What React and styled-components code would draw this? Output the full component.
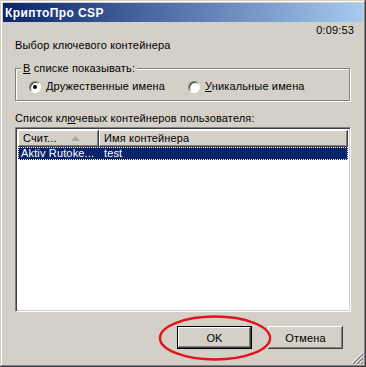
import styled, { createGlobalStyle } from "styled-components";

const GlobalStyle = createGlobalStyle`
  html, body {
    margin: 0;
    padding: 0;
    background: #d4d0c8;
  }
  body {
    font-family: "Liberation Sans", Arial, sans-serif;
    font-size: 11px;
    letter-spacing: 0.15px;
    color: #000;
  }
`;

const Window = styled.div`
  position: relative;
  width: 366px;
  height: 367px;
  box-sizing: border-box;
  padding: 3px;
  background: #d4d0c8;
  display: flex;
  flex-direction: column;
  box-shadow: inset -1px -1px #404040, inset 1px 1px #d4d0c8,
    inset -2px -2px #808080, inset 2px 2px #fff;
`;

const TitleBar = styled.div`
  height: 19px;
  flex-shrink: 0;
  display: flex;
  align-items: center;
  padding-left: 2px;
  background: linear-gradient(to right, #0a246a, #a6caf0);
  color: #fff;
  font-weight: bold;
  font-size: 12px;
  letter-spacing: 0.4px;
`;

const Body = styled.div`
  flex: 1;
  display: flex;
  flex-direction: column;
  padding: 0 12px 0 12px;
  line-height: 13px;
`;

const Timer = styled.div`
  margin-top: 2px;
  text-align: right;
  margin-right: -3px;
`;

const Caption = styled.div`
  margin-top: ${(p) => p.$top || 0}px;
`;

const GroupBox = styled.div`
  position: relative;
  margin-top: 16px;
  height: 33px;
  border: 1px solid #808080;
  box-shadow: inset 1px 1px #fff, 1px 1px #fff;
  display: flex;
  align-items: center;
  padding: 4px 0 0 13px;
  box-sizing: border-box;
  width: 335px;
`;

const Legend = styled.div`
  position: absolute;
  left: 5px;
  top: -7px;
  padding: 0 2px;
  background: #d4d0c8;
`;

const RadioLabel = styled.label`
  display: flex;
  align-items: center;
  gap: 5px;
  width: ${(p) => p.$w}px;
`;

const RadioCircle = styled.span`
  position: relative;
  width: 12px;
  height: 12px;
  box-sizing: border-box;
  border-radius: 50%;
  background: #fff;
  border: 1px solid;
  border-color: #808080 #fff #fff #808080;
  box-shadow: inset 1px 1px #404040;
  &::after {
    content: "";
    display: ${(p) => (p.$checked ? "block" : "none")};
    position: absolute;
    left: 3px;
    top: 3px;
    width: 4px;
    height: 4px;
    border-radius: 50%;
    background: #000;
  }
`;

const ListView = styled.div`
  margin-top: 2px;
  height: 185px;
  width: 336px;
  box-sizing: border-box;
  background: #fff;
  border: 1px solid;
  border-color: #808080 #fff #fff #808080;
  box-shadow: inset 1px 1px #404040, inset -1px -1px #d4d0c8;
  padding: 2px;
  display: flex;
  flex-direction: column;
`;

const HeaderRow = styled.div`
  display: flex;
  height: 17px;
  flex-shrink: 0;
`;

const HeaderCell = styled.div`
  box-sizing: border-box;
  width: ${(p) => (p.$w ? `${p.$w}px` : "auto")};
  flex: ${(p) => (p.$w ? "none" : 1)};
  background: #d4d0c8;
  display: flex;
  align-items: center;
  padding-left: 5px;
  gap: 14px;
  box-shadow: inset -1px -1px #404040, inset 1px 1px #fff,
    inset -2px -2px #808080;
`;

const Row = styled.div`
  display: flex;
  height: 13px;
  background: ${(p) => (p.$selected ? "#0a246a" : "transparent")};
  color: ${(p) => (p.$selected ? "#fff" : "#000")};
  outline: ${(p) => (p.$selected ? "1px dotted #fff" : "none")};
  outline-offset: -1px;
`;

const Cell = styled.div`
  width: ${(p) => (p.$w ? `${p.$w}px` : "auto")};
  flex: ${(p) => (p.$w ? "none" : 1)};
  box-sizing: border-box;
  padding-left: ${(p) => p.$pad}px;
  white-space: nowrap;
`;

const ButtonRow = styled.div`
  margin-top: 14px;
  display: flex;
  justify-content: flex-end;
  gap: 16px;
  padding-right: 8px;
  position: relative;
`;

const Button = styled.button`
  width: 75px;
  height: 23px;
  font-family: inherit;
  font-size: 11px;
  letter-spacing: 0.15px;
  color: #000;
  background: #d4d0c8;
  border: ${(p) => (p.$default ? "1px solid #000" : "none")};
  padding: 0;
  box-shadow: ${(p) =>
    p.$default
      ? "inset -1px -1px #404040, inset 1px 1px #fff, inset -2px -2px #808080"
      : "inset -1px -1px #404040, inset 1px 1px #fff, inset -2px -2px #808080, inset 2px 2px #d4d0c8"};
`;

const Highlight = styled.svg`
  position: absolute;
  left: 140px;
  top: -11px;
  pointer-events: none;
`;

const Grip = styled.svg`
  position: absolute;
  right: 3px;
  bottom: 3px;
`;

export default function App() {
  return (
    <>
      <GlobalStyle />
      <Window>
        <TitleBar>КриптоПро CSP</TitleBar>
        <Body>
          <Timer>0:09:53</Timer>
          <Caption $top={2}>Выбор ключевого контейнера</Caption>
          <GroupBox>
            <Legend>
              <u>В</u> списке показывать:
            </Legend>
            <RadioLabel $w={159}>
              <RadioCircle $checked />
              <span>
                <u>Д</u>ружественные имена
              </span>
            </RadioLabel>
            <RadioLabel>
              <RadioCircle />
              <span>
                <u>У</u>никальные имена
              </span>
            </RadioLabel>
          </GroupBox>
          <Caption $top={11}>
            Список кл<u>ю</u>чевых контейнеров пользователя:
          </Caption>
          <ListView>
            <HeaderRow>
              <HeaderCell $w={81}>
                <span>Счит...</span>
                <svg width="9" height="5" viewBox="0 0 9 5">
                  <polygon points="4.5,0 9,5 0,5" fill="#a8a8a8" />
                </svg>
              </HeaderCell>
              <HeaderCell>Имя контейнера</HeaderCell>
            </HeaderRow>
            <Row $selected>
              <Cell $w={81} $pad={3}>
                Aktiv Rutoke...
              </Cell>
              <Cell $pad={5}>test</Cell>
            </Row>
          </ListView>
          <ButtonRow>
            <Button $default>OK</Button>
            <Button>Отмена</Button>
            <Highlight width="120" height="48" viewBox="0 0 120 48">
              <ellipse
                cx="60"
                cy="23"
                rx="55"
                ry="21.5"
                fill="none"
                stroke="#e0141a"
                strokeWidth="2.5"
              />
            </Highlight>
          </ButtonRow>
        </Body>
        <Grip width="12" height="12" viewBox="0 0 12 12">
          <path d="M11 1 L1 11 M11 5 L5 11 M11 9 L9 11" stroke="#fff" strokeWidth="1" />
          <path d="M12 2 L2 12 M12 6 L6 12 M12 10 L10 12" stroke="#808080" strokeWidth="1.4" />
        </Grip>
      </Window>
    </>
  );
}
